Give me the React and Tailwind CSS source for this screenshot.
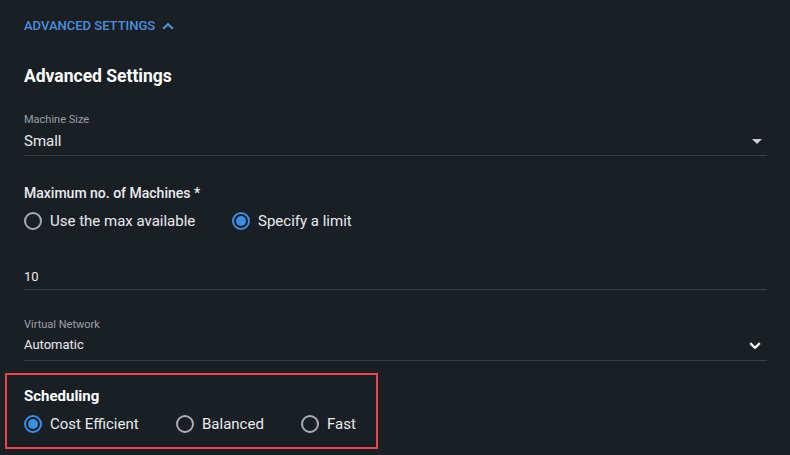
import { useState } from "react";

// Advanced settings panel: a collapsible section with selects, radio groups
// and a number field, drawn in the dark theme.

function Radio({ checked, label, onSelect, className = "" }) {
  return (
    <button
      type="button"
      onClick={onSelect}
      className={`flex items-center gap-2 h-5 text-left ${className}`}
    >
      <span
        className={`flex items-center justify-center w-[18px] h-[18px] rounded-full border-2 shrink-0 ${
          checked ? "border-[#3b8ee2]" : "border-[#a9adb2]"
        }`}
      >
        {checked && <span className="w-[10px] h-[10px] rounded-full bg-[#3b8ee2]" />}
      </span>
      <span className="text-[15px] leading-5 text-[#e9ebee]">{label}</span>
    </button>
  );
}

function Caret() {
  return (
    <svg width="10" height="5" viewBox="0 0 10 5" className="text-[#c9cdd2]">
      <path d="M0 0h10L5 5z" fill="currentColor" />
    </svg>
  );
}

function ChevronDown() {
  return (
    <svg width="12" height="7" viewBox="0 0 12 7" fill="none">
      <path d="M1.2 1.2L6 5.8l4.8-4.6" stroke="#f2f3f5" strokeWidth="2.4" />
    </svg>
  );
}

export default function App() {
  const [limitMode, setLimitMode] = useState("limit");
  const [schedule, setSchedule] = useState("cost");

  return (
    <div
      className="w-[790px] h-[455px] overflow-hidden bg-[#1a1f26] pl-6 pr-[23px] text-[#e9ebee]"
      style={{ fontFamily: "Roboto, 'Liberation Sans', sans-serif" }}
    >
      {/* Section toggle */}
      <button
        type="button"
        className="mt-4 flex items-center gap-[7px] h-5 text-[13px] leading-5 font-medium text-[#4a8fdc] uppercase"
      >
        Advanced Settings
        <svg width="12" height="7" viewBox="0 0 12 7" fill="none">
          <path d="M1.2 5.8L6 1.2l4.8 4.6" stroke="#4a8fdc" strokeWidth="2.2" />
        </svg>
      </button>

      <h2 className="mt-7 h-6 text-[17.5px] leading-6 font-bold text-white">Advanced Settings</h2>

      {/* Machine size select */}
      <div className="mt-[25px] border-b border-[#3a3f46] pb-[4px]">
        <div className="text-[11px] leading-[14px] text-[#9ba0a6]">Machine Size</div>
        <div className="mt-[4px] flex items-center justify-between h-5 pr-[5px]">
          <span className="text-[15px] leading-5">Small</span>
          <Caret />
        </div>
      </div>

      {/* Max machines */}
      <div className="mt-[27px] text-[14px] leading-5 font-medium">Maximum no. of Machines *</div>
      <div className="mt-[8px] flex">
        <Radio
          className="w-[208px]"
          label="Use the max available"
          checked={limitMode === "max"}
          onSelect={() => setLimitMode("max")}
        />
        <Radio
          label="Specify a limit"
          checked={limitMode === "limit"}
          onSelect={() => setLimitMode("limit")}
        />
      </div>

      <div className="mt-[37px] border-b border-[#3a3f46] pb-[3px]">
        <div className="text-[13px] leading-[18px]">10</div>
      </div>

      {/* Virtual network select */}
      <div className="mt-[28px] border-b border-[#3a3f46] pb-[5px]">
        <div className="text-[11px] leading-[14px] text-[#9ba0a6]">Virtual Network</div>
        <div className="mt-[3px] flex items-center justify-between h-5 pr-[6px]">
          <span className="text-[13px] leading-5">Automatic</span>
          <ChevronDown />
        </div>
      </div>

      {/* Scheduling (highlighted) */}
      <div className="mt-[12px] -ml-[19px] w-[373px] border-2 border-[#e8464c] pl-[17px] pt-[11px] pb-[13px]">
        <div className="text-[15px] leading-5 font-bold text-white">Scheduling</div>
        <div className="mt-[8px] flex">
          <Radio
            className="w-[152px]"
            label="Cost Efficient"
            checked={schedule === "cost"}
            onSelect={() => setSchedule("cost")}
          />
          <Radio
            className="w-[125px]"
            label="Balanced"
            checked={schedule === "balanced"}
            onSelect={() => setSchedule("balanced")}
          />
          <Radio label="Fast" checked={schedule === "fast"} onSelect={() => setSchedule("fast")} />
        </div>
      </div>
    </div>
  );
}
